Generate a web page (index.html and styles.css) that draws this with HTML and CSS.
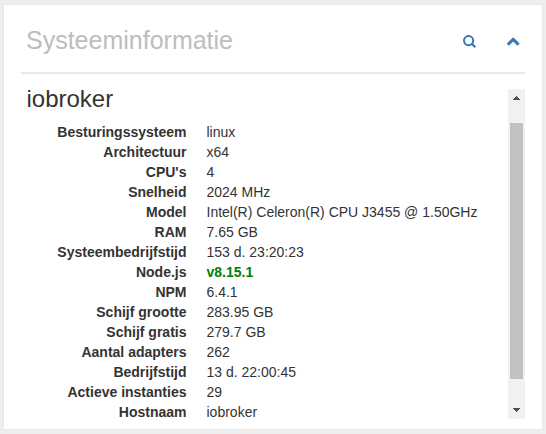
FILE: index.html
```html
<!DOCTYPE html>
<html lang="nl">
<head>
<meta charset="utf-8">
<title>Systeeminformatie</title>
<link rel="stylesheet" href="styles.css">
</head>
<body>
<section class="panel">
  <header class="panel-header">
    <h2 class="panel-title">Systeeminformatie</h2>
    <nav class="tools">
      <svg class="icon" width="14" height="14" viewBox="0 0 14 14"><circle cx="5.6" cy="5.6" r="4.6" fill="none" stroke="currentColor" stroke-width="2"/><path d="M8.8 8.8L12.3 12.3" stroke="currentColor" stroke-width="2.2"/></svg>
      <svg class="icon" width="14" height="14" viewBox="0 0 14 14"><path d="M1.8 9.6L7.2 4.4L12.6 9.6" fill="none" stroke="currentColor" stroke-width="3"/></svg>
    </nav>
  </header>
  <div class="panel-body">
    <div class="content">
      <h3 class="host">iobroker</h3>
      <dl class="info">
        <dt>Besturingssysteem</dt><dd>linux</dd>
        <dt>Architectuur</dt><dd>x64</dd>
        <dt>CPU's</dt><dd>4</dd>
        <dt>Snelheid</dt><dd>2024 MHz</dd>
        <dt>Model</dt><dd>Intel(R) Celeron(R) CPU J3455 @ 1.50GHz</dd>
        <dt>RAM</dt><dd>7.65 GB</dd>
        <dt>Systeembedrijfstijd</dt><dd>153 d. 23:20:23</dd>
        <dt>Node.js</dt><dd class="current">v8.15.1</dd>
        <dt>NPM</dt><dd>6.4.1</dd>
        <dt>Schijf grootte</dt><dd>283.95 GB</dd>
        <dt>Schijf gratis</dt><dd>279.7 GB</dd>
        <dt>Aantal adapters</dt><dd>262</dd>
        <dt>Bedrijfstijd</dt><dd>13 d. 22:00:45</dd>
        <dt>Actieve instanties</dt><dd>29</dd>
        <dt>Hostnaam</dt><dd>iobroker</dd>
      </dl>
    </div>
    <div class="scrollbar">
      <svg class="arrow" width="17" height="17" viewBox="0 0 17 17" shape-rendering="crispEdges"><path d="M5 11h7v-1h-1v-1h-1v-1h-1v-1h-1v1h-1v1h-1v1h-1z" fill="#505050"/></svg>
      <div class="track"><div class="thumb"></div></div>
      <svg class="arrow" width="17" height="17" viewBox="0 0 17 17" shape-rendering="crispEdges"><path d="M5 6h7v1h-1v1h-1v1h-1v1h-1v-1h-1v-1h-1v-1h-1z" fill="#505050"/></svg>
    </div>
  </div>
</section>
</body>
</html>
```
FILE: styles.css
```css
* { box-sizing: border-box; }
body {
  margin: 0;
  height: 434px;
  padding: 4px 3px;
  background: #eee;
  font: 14px/20px "Liberation Sans", Arial, sans-serif;
  color: #333;
  overflow: hidden;
}
.panel {
  height: 426px;
  padding: 10px 17px;
  background: #fff;
  border: 1px solid #e6e9ed;
}
.panel-header {
  display: flex;
  justify-content: space-between;
  height: 59px;
  padding: 0 5px;
  border-bottom: 2px solid #e6e9ed;
}
.panel-title {
  margin: 9px 0 0;
  font-size: 25px;
  line-height: 32px;
  font-weight: 400;
  color: #bdbdbd;
}
.tools {
  display: flex;
  gap: 29px;
  padding: 20px 0 0;
  color: #337ab7;
}
.panel-body {
  display: flex;
  height: 330px;
  margin-top: 15px;
}
.content { flex: 1; padding-left: 5.5px; }
.host {
  margin: -5px 0 8px;
  font-size: 24px;
  line-height: 30px;
  font-weight: 400;
}
.info {
  display: grid;
  grid-template-columns: 160px 1fr;
  grid-auto-rows: 20px;
  column-gap: 20px;
  margin: 0;
  white-space: nowrap;
}
.info dt { font-weight: 700; text-align: right; }
.info dd { margin: 0; }
.info .current { color: green; font-weight: 700; }
.scrollbar {
  display: flex;
  flex-direction: column;
  width: 17px;
  background: #f1f1f1;
}
.arrow { display: block; }
.track { flex: 1; padding: 17px 2px 0; }
.thumb { height: 256px; background: #c1c1c1; }
```
